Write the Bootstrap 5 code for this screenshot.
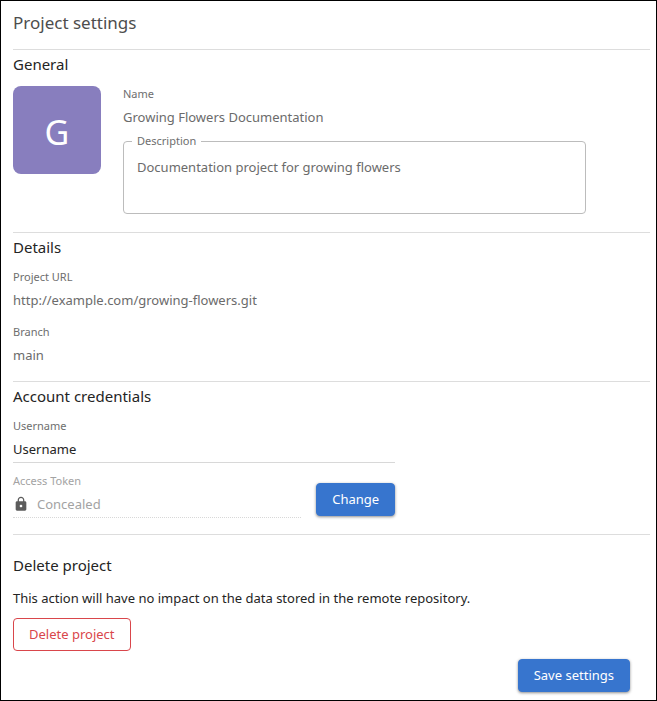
<!DOCTYPE html>
<html lang="en">
<head>
<meta charset="utf-8">
<meta name="viewport" content="width=device-width, initial-scale=1">
<title>Project settings</title>
<link rel="stylesheet" href="https://cdn.jsdelivr.net/npm/bootstrap@5.3.0/dist/css/bootstrap.min.css">
<style>
  body { font-family: "Noto Sans", "Open Sans", sans-serif; font-size: 13px; line-height: 20px; color: #242424; background: #fff; }
  .settings-page { border: 1px solid #000; padding: 8px 6px 8px 12px; }
  .page-title { font-size: 17px; line-height: 28px; font-weight: 400; color: #4d4d4d; margin: 0 0 12px; }
  .settings-section { border-top: 1px solid #ddd; }
  .section-title { font-size: 15px; line-height: 28px; font-weight: 400; margin: 0 0 8px; }
  .field-label { display: block; font-size: 11px; line-height: 16px; color: #6e6e6e; margin: 0 0 3px; }
  .field-value { line-height: 24px; color: #6b6b6b; margin: 0; }
  .project-avatar { width: 88px; height: 88px; padding-top: 4px; border-radius: 8px; background: #887ebe; color: #fff; font-size: 34px; line-height: 40px; }
  .general-row { width: 90%; gap: 22px; }
  .general-section { padding-bottom: 18px; }
  .details-section { padding-bottom: 14px; }
  .account-section { padding-bottom: 16px; }
  .delete-section { padding-top: 16px; }
  .field-stack { gap: 12px; }
  .outlined-field { border: 1px solid #bcbcbc; border-radius: 4px; padding: 0 8px; margin-top: 4px; }
  .outlined-field legend { padding: 0 5px; line-height: 16px; }
  .outlined-field textarea { display: block; height: 64px; padding: 8px 5px; line-height: 20px; color: #6b6b6b; resize: none; background: none; }
  .plain-input { line-height: 24px; height: 24px; padding: 0; color: #242424; background: none; outline-offset: 2px; }
  .plain-input:disabled { color: #a3a3a3; opacity: 1; }
  .account-fields { width: 60%; gap: 10px; }
  .line-field { border-bottom: 1px solid #d8d8d8; padding-bottom: 1px; }
  .line-field.dotted-line { border-bottom-style: dotted; }
  .muted-label { color: #a3a3a3; }
  .action-btn { font-size: 13px; line-height: 21px; padding: 5px 15px; border-radius: 4px; }
  .action-primary { --bs-btn-bg: #3775ce; --bs-btn-border-color: #3775ce; --bs-btn-hover-bg: #2c66bb; --bs-btn-hover-border-color: #2c66bb; box-shadow: 0 1px 3px rgba(0,0,0,.45); }
  .action-danger { --bs-btn-color: #d9464b; --bs-btn-border-color: #d9464b; --bs-btn-hover-bg: #d9464b; --bs-btn-hover-border-color: #d9464b; }
  .token-row { gap: 15px; }
  .token-row .action-btn { margin-bottom: 2px; }
  .delete-note { line-height: 22px; margin: 0 0 9px; }
  .page-actions { margin-top: 8px; padding-right: 20px; }
</style>
</head>
<body>
<form class="settings-page min-vh-100">
  <h1 class="page-title">Project settings</h1>

  <section class="settings-section general-section">
    <h2 class="section-title">General</h2>
    <div class="general-row d-flex align-items-start">
      <div class="project-avatar d-flex align-items-center justify-content-center flex-shrink-0">G</div>
      <div class="flex-grow-1">
        <div class="field-label">Name</div>
        <p class="field-value">Growing Flowers Documentation</p>
        <fieldset class="outlined-field">
          <legend class="float-none w-auto mb-0 fs-6"><label class="field-label m-0" for="description">Description</label></legend>
          <textarea class="border-0 w-100" id="description">Documentation project for growing flowers</textarea>
        </fieldset>
      </div>
    </div>
  </section>

  <section class="settings-section details-section">
    <h2 class="section-title">Details</h2>
    <div class="field-stack d-flex flex-column">
      <div>
        <div class="field-label">Project URL</div>
        <p class="field-value">http://example.com/growing-flowers.git</p>
      </div>
      <div>
        <div class="field-label">Branch</div>
        <p class="field-value">main</p>
      </div>
    </div>
  </section>

  <section class="settings-section account-section">
    <h2 class="section-title">Account credentials</h2>
    <div class="account-fields d-flex flex-column">
      <div>
        <label class="field-label" for="username">Username</label>
        <div class="line-field d-flex"><input class="plain-input border-0 w-100" id="username" type="text" value="Username"></div>
      </div>
      <div class="token-row d-flex align-items-end">
        <div class="flex-grow-1">
          <label class="field-label muted-label" for="token">Access Token</label>
          <div class="line-field dotted-line d-flex align-items-center gap-2">
            <svg width="16" height="16" viewBox="0 0 24 24" fill="#5c5c5c" class="flex-shrink-0" aria-hidden="true"><path d="M18 8h-1V6c0-2.760-2.240-5-5-5S7 3.240 7 6v2H6c-1.100 0-2 .9-2 2v10c0 1.100.9 2 2 2h12c1.100 0 2-.9 2-2V10c0-1.100-.9-2-2-2zm-6 9c-1.100 0-2-.9-2-2s.9-2 2-2 2 .9 2 2-.9 2-2 2zm3.100-9H8.900V6c0-1.710 1.390-3.100 3.100-3.100s3.100 1.390 3.100 3.100v2z"/></svg>
            <input class="plain-input border-0 w-100" id="token" type="text" value="Concealed" disabled>
          </div>
        </div>
        <button class="btn btn-primary action-btn action-primary flex-shrink-0" type="button">Change</button>
      </div>
    </div>
  </section>

  <section class="settings-section delete-section">
    <h2 class="section-title">Delete project</h2>
    <p class="delete-note">This action will have no impact on the data stored in the remote repository.</p>
    <button class="btn btn-outline-danger action-btn action-danger" type="button">Delete project</button>
  </section>

  <div class="page-actions d-flex justify-content-end">
    <button class="btn btn-primary action-btn action-primary" type="submit">Save settings</button>
  </div>
</form>
<script src="https://cdn.jsdelivr.net/npm/bootstrap@5.3.0/dist/js/bootstrap.bundle.min.js"></script>
</body>
</html>
